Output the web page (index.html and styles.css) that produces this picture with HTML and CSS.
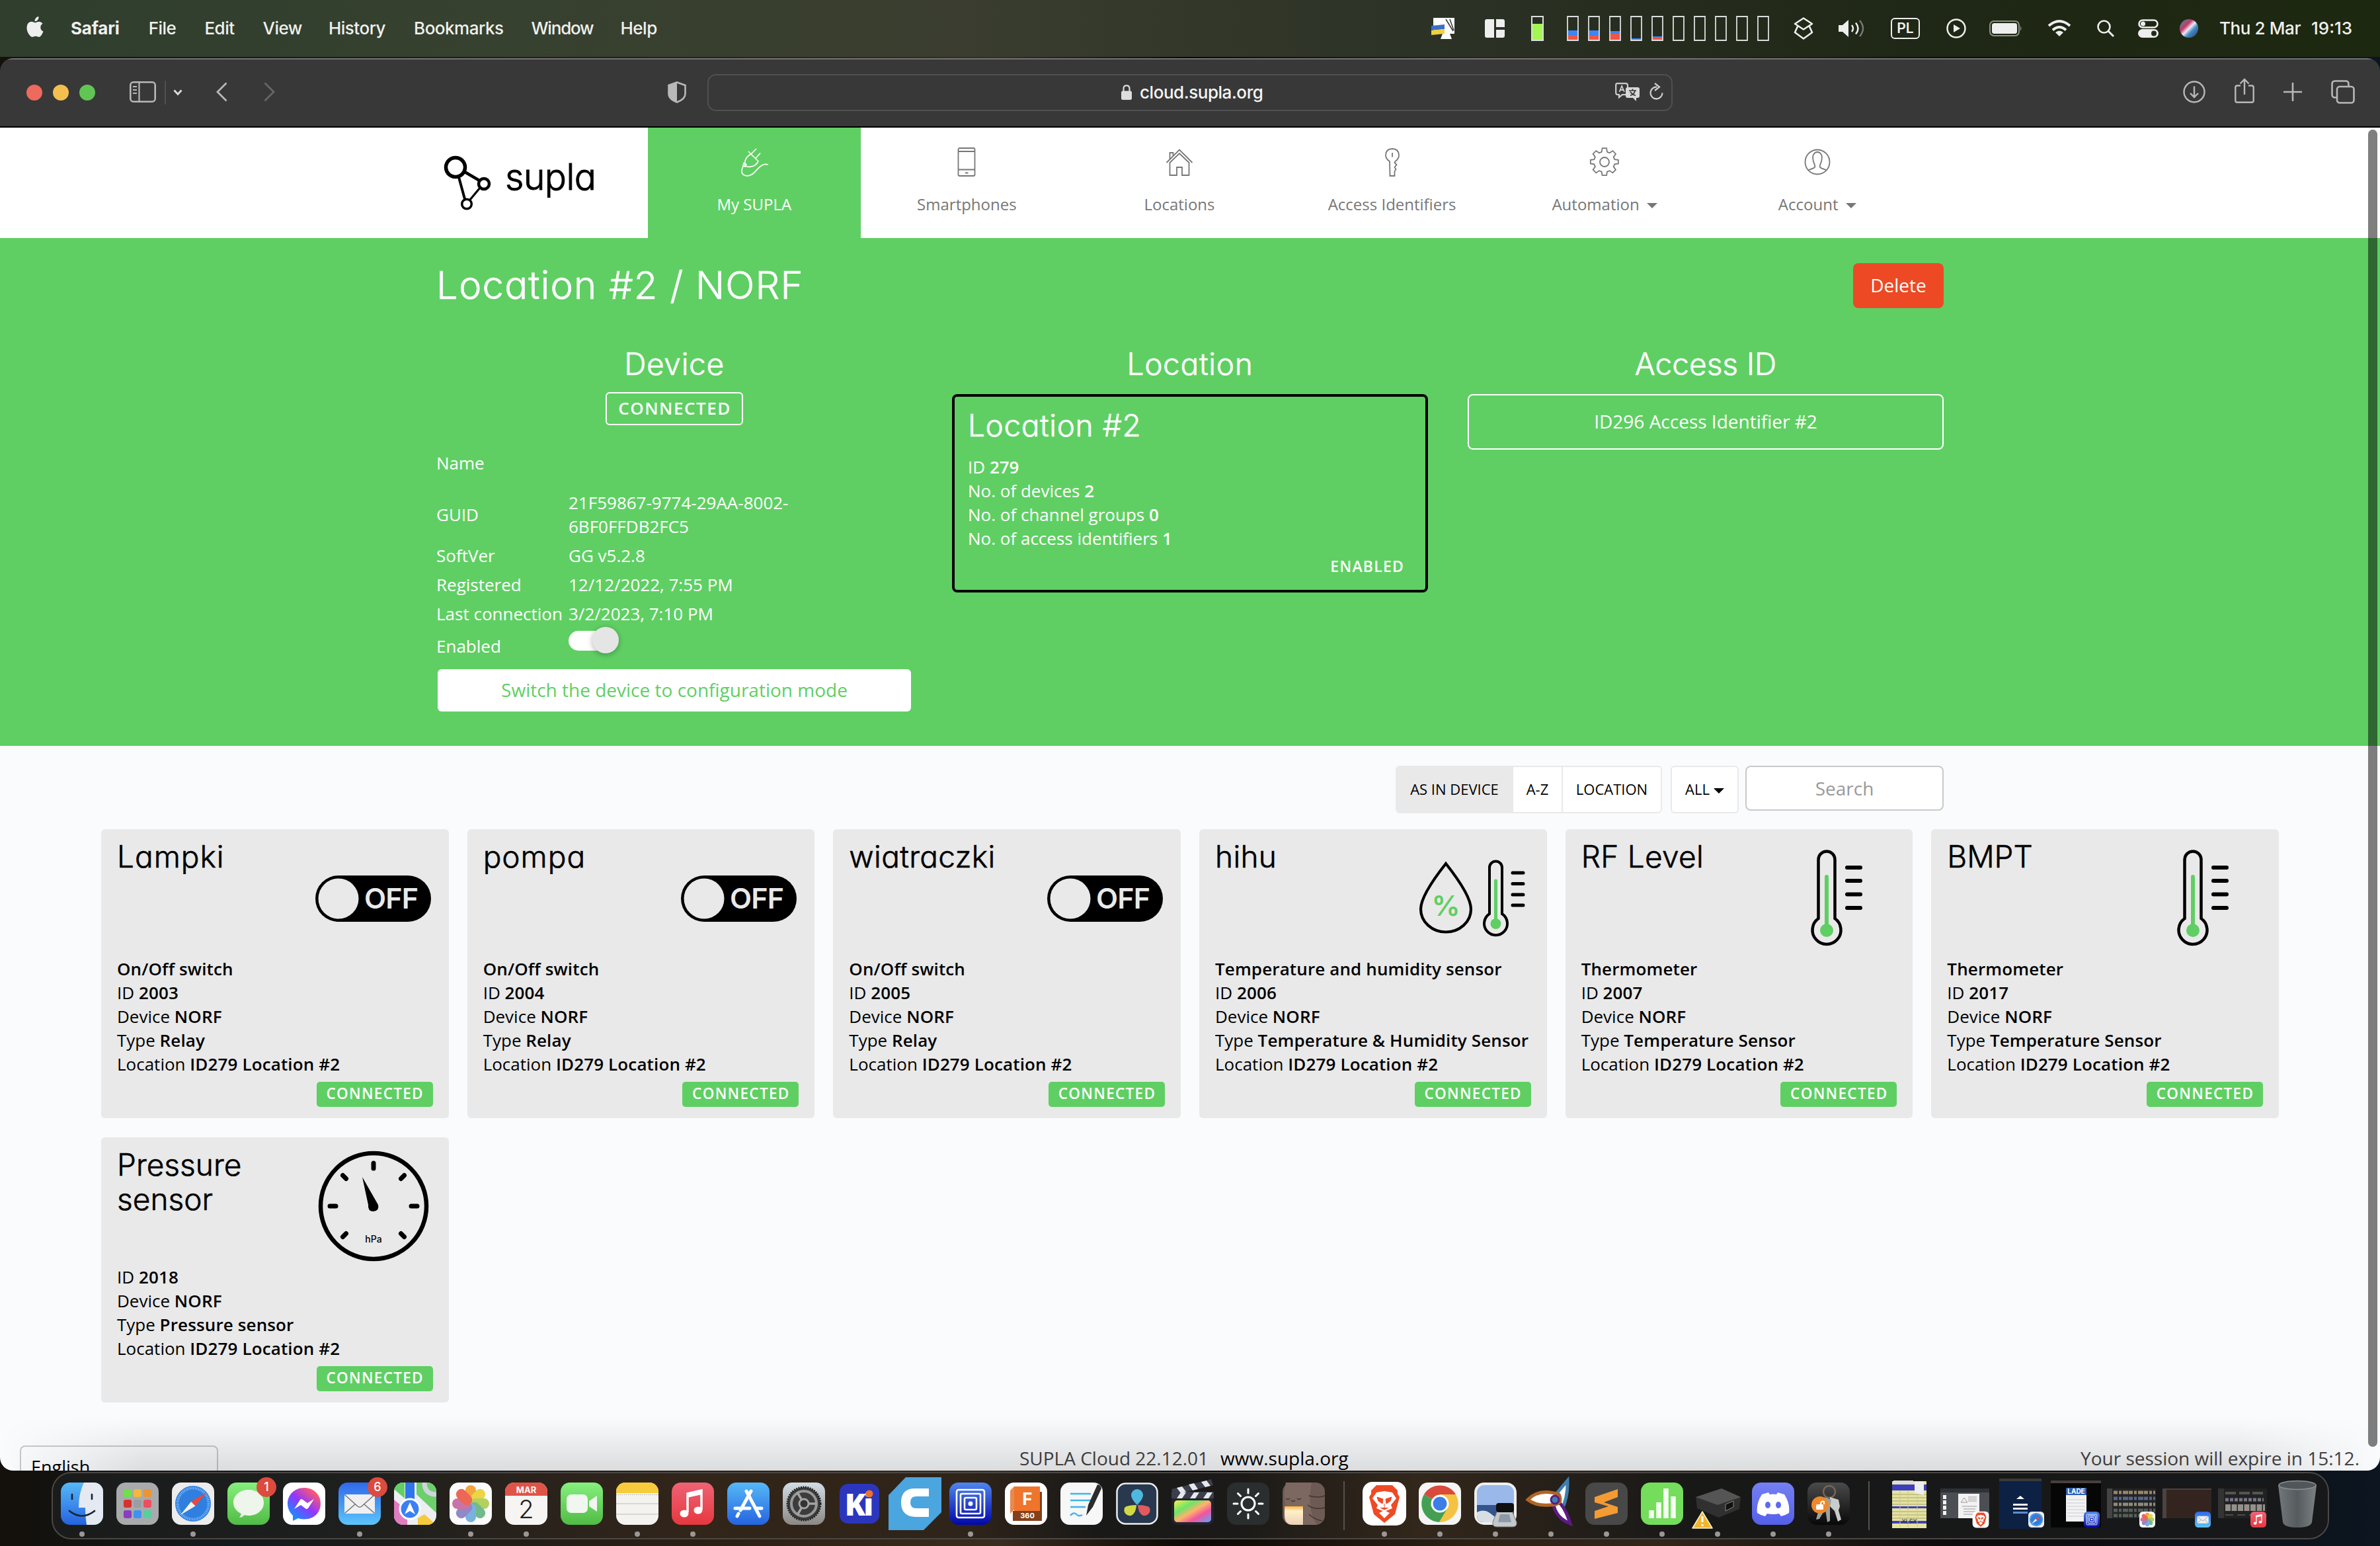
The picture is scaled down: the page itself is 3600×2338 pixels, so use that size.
FILE: index.html
```html
<!DOCTYPE html>
<html lang="en">
<head>
<meta charset="utf-8">
<title>SUPLA Cloud</title>
<link rel="stylesheet" href="styles.css">
</head>
<body>
<svg class="defs" aria-hidden="true">
  <defs>
    <linearGradient id="g-blue" x2="0" y2="1"><stop stop-color="#56b9f7"/><stop offset="1" stop-color="#2563e0"/></linearGradient>
    <linearGradient id="g-mail" x2="0" y2="1"><stop stop-color="#3069ea"/><stop offset="1" stop-color="#5cc5fb"/></linearGradient>
    <linearGradient id="g-green" x2="0" y2="1"><stop stop-color="#86f07d"/><stop offset="1" stop-color="#50bb45"/></linearGradient>
    <linearGradient id="g-red" x2="0" y2="1"><stop stop-color="#ee6375"/><stop offset="1" stop-color="#e6383f"/></linearGradient>
    <linearGradient id="g-gray" x2="0" y2="1"><stop stop-color="#d2dde5"/><stop offset="1" stop-color="#8b8884"/></linearGradient>
    <linearGradient id="g-deep" x2="0" y2="1"><stop stop-color="#4f86ee"/><stop offset="1" stop-color="#0207a8"/></linearGradient>
    <linearGradient id="g-msgr" x2="1" y2="0" gradientTransform="rotate(-50 .5 .5)"><stop stop-color="#1a8bff"/><stop offset=".5" stop-color="#9036ff"/><stop offset="1" stop-color="#ff5a6e"/></linearGradient>
    <linearGradient id="g-fcp" x2="1" y2="1"><stop stop-color="#fff04a"/><stop offset=".3" stop-color="#6be46a"/><stop offset=".5" stop-color="#ffb36b"/><stop offset=".7" stop-color="#f1559f"/><stop offset="1" stop-color="#58a6ff"/></linearGradient>
    <linearGradient id="g-glow" x2="0" y2="1"><stop stop-color="#ffb640"/><stop offset=".25" stop-color="#fff0c8"/><stop offset="1" stop-color="#ecd0b8"/></linearGradient>
    <linearGradient id="g-discord" x2="0" y2="1"><stop stop-color="#7580f2"/><stop offset="1" stop-color="#5560ea"/></linearGradient>
    <linearGradient id="g-dark" x2="0" y2="1"><stop stop-color="#4a4a4a"/><stop offset="1" stop-color="#080808"/></linearGradient>
    <linearGradient id="g-trash" x2="1" y2="0"><stop stop-color="#71777a"/><stop offset=".5" stop-color="#565b5e"/><stop offset="1" stop-color="#7c8184"/></linearGradient>
    <linearGradient id="g-siri" x2="1" y2="1"><stop stop-color="#2f9a86"/><stop offset=".35" stop-color="#c23a6c"/><stop offset=".5" stop-color="#f4e6f4"/><stop offset=".65" stop-color="#3f8fc4"/><stop offset="1" stop-color="#3a2a66"/></linearGradient>
    <symbol id="finder" viewBox="0 0 64 64">
      <rect width="64" height="64" rx="14" fill="url(#g-blue)"/>
      <path d="M35 0H50a14 14 0 0 1 14 14V50a14 14 0 0 1-14 14H39Q37 52 37 38H27Q27 16 35 0Z" fill="#e4e9f2"/>
      <path d="M17 18v7M47 18v7M13 43q19 15 38 0" fill="none" stroke="#1a2330" stroke-width="2.6" stroke-linecap="round"/>
    </symbol>
    <symbol id="launchpad" viewBox="0 0 64 64">
      <rect width="64" height="64" rx="14" fill="#a9aaab"/>
      <rect x="11" y="10" width="12" height="12" rx="3" fill="#6fe04c"/><rect x="26" y="10" width="12" height="12" rx="3" fill="#f4b83a"/><rect x="41" y="10" width="12" height="12" rx="3" fill="#ec9434"/>
      <rect x="11" y="26" width="12" height="12" rx="3" fill="#d8322c"/><rect x="26" y="26" width="12" height="12" rx="3" fill="#9a9ea2"/><rect x="41" y="26" width="12" height="12" rx="3" fill="#ef4d62"/>
      <rect x="11" y="42" width="12" height="12" rx="3" fill="#8b3cc4"/><rect x="26" y="42" width="12" height="12" rx="3" fill="#3b94f4"/><rect x="41" y="42" width="12" height="12" rx="3" fill="#56cfa0"/>
    </symbol>
    <symbol id="safari" viewBox="0 0 64 64">
      <rect width="64" height="64" rx="14" fill="#ececec"/><circle cx="32" cy="32" r="27" fill="#2f7fe0"/>
      <circle cx="32" cy="32" r="23.500" fill="none" stroke="#a9d4fa" stroke-width="4" stroke-dasharray=".8 1.660"/>
      <path d="M52 15 35.500 35.500 29 29Z" fill="#f0453a"/><path d="M13 49 29 29l6.500 6.500Z" fill="#f3f3f3"/>
    </symbol>
    <symbol id="messages" viewBox="0 0 64 64">
      <rect width="64" height="64" rx="14" fill="url(#g-green)"/>
      <path d="M32 11c13 0 23 8 23 19.500S45 50 32 50q-3 0-6-.7-3 3-8 3.700 3-3 2.500-6Q9 41 9 30.500C9 19 19 11 32 11Z" fill="#eef5ea"/>
    </symbol>
    <symbol id="messenger" viewBox="0 0 64 64">
      <rect width="64" height="64" rx="14" fill="#fff"/>
      <path d="M32 8C17 8 7 19 7 32q0 10 8 18v8l8-4q4 1.500 9 1.500c15 0 25-10 25-23.500S47 8 32 8Z" fill="url(#g-msgr)"/>
      <path d="m17 40 9-14q2-2 4 0l7 5 10-6-9 14q-2 2-4 .3L27 34Z" fill="#fff"/>
    </symbol>
    <symbol id="mail" viewBox="0 0 64 64">
      <rect width="64" height="64" rx="14" fill="url(#g-mail)"/>
      <rect x="9" y="18" width="46" height="29" rx="3" fill="#f0f0f0"/>
      <path d="m10 19 19 17q3 2.500 6 0l19-17M10 46l15-13m29 13L39 33" fill="none" stroke="#777" stroke-width="1.600"/>
    </symbol>
    <symbol id="maps" viewBox="0 0 64 64">
      <clipPath id="c-map"><rect width="64" height="64" rx="14"/></clipPath>
      <g clip-path="url(#c-map)"><rect width="64" height="64" fill="#eceef2"/><path d="M0 0h16v24L0 10Z" fill="#62cf66"/><path d="M34 0h30v46L34 18Z" fill="#6ccf6c"/><path d="M0 26 20 42v22H0Z" fill="#e07cc0"/><path d="M36 64V54l10-6 18 16Z" fill="#f6c93e"/><path d="M17 0h14v28H17Z" fill="#2e74ee"/><path d="M46 0q0 18 18 18" fill="none" stroke="#cfd4dd" stroke-width="7"/></g>
      <circle cx="24" cy="40" r="15" fill="#3a80f4" stroke="#fff" stroke-width="3"/><path d="m24 30 8 18-8-5-8 5Z" fill="#fff"/>
    </symbol>
    <symbol id="photos" viewBox="0 0 64 64">
      <rect width="64" height="64" rx="14" fill="#fbfbfb"/>
      <g opacity=".88"><rect x="24" y="4" width="16" height="28" rx="8" fill="#f39a27"/><rect x="24" y="4" width="16" height="28" rx="8" fill="#e9d02c" transform="rotate(45 32 32)"/><rect x="24" y="4" width="16" height="28" rx="8" fill="#a9cc4a" transform="rotate(90 32 32)"/><rect x="24" y="4" width="16" height="28" rx="8" fill="#5fb27c" transform="rotate(135 32 32)"/><rect x="24" y="4" width="16" height="28" rx="8" fill="#67a8dc" transform="rotate(180 32 32)"/><rect x="24" y="4" width="16" height="28" rx="8" fill="#8478c0" transform="rotate(225 32 32)"/><rect x="24" y="4" width="16" height="28" rx="8" fill="#c2639a" transform="rotate(270 32 32)"/><rect x="24" y="4" width="16" height="28" rx="8" fill="#ea5340" transform="rotate(315 32 32)"/></g>
    </symbol>
    <symbol id="calendar" viewBox="0 0 64 64">
      <rect width="64" height="64" rx="14" fill="#f6f5f3"/><path d="M0 20V14A14 14 0 0 1 14 0H50A14 14 0 0 1 64 14v6Z" fill="#e05448"/>
      <text x="32" y="15.500" class="cal-month">MAR</text><text x="32" y="54" class="cal-day">2</text>
    </symbol>
    <symbol id="facetime" viewBox="0 0 64 64">
      <rect width="64" height="64" rx="14" fill="url(#g-green)"/><rect x="9" y="18" width="32" height="28" rx="7" fill="#f2f6f0"/><path d="M43 28 55 20v24L43 36Z" fill="#f2f6f0"/>
    </symbol>
    <symbol id="notes" viewBox="0 0 64 64">
      <rect width="64" height="64" rx="14" fill="#f4f3f0"/><path d="M0 16V14A14 14 0 0 1 14 0H50A14 14 0 0 1 64 14v2Z" fill="#f8cb3c"/><path d="M0 18.500H64" stroke="#b8b4a8" stroke-dasharray="1.500 1.500"/><path d="M0 32H64M0 48H64" stroke="#cfcdc9" stroke-width="1.300"/>
    </symbol>
    <symbol id="music" viewBox="0 0 64 64">
      <rect width="64" height="64" rx="14" fill="url(#g-red)"/><path d="M24 45V17l21-5v29" fill="none" stroke="#fff" stroke-width="3.500"/><path d="M23 16 46 11v7L23 23Z" fill="#fff"/><ellipse cx="19" cy="47" rx="6.500" ry="5.500" fill="#fff"/><ellipse cx="40" cy="42" rx="6.500" ry="5.500" fill="#fff"/>
    </symbol>
    <symbol id="appstore" viewBox="0 0 64 64">
      <rect width="64" height="64" rx="14" fill="url(#g-blue)"/><path d="m29 13 18 34M36 13 20 42M17 47l-2 4M12 39h22M43 39h9M47 47l2 4" stroke="#fff" stroke-width="5" stroke-linecap="round"/>
    </symbol>
    <symbol id="settings" viewBox="0 0 64 64">
      <rect width="64" height="64" rx="14" fill="url(#g-gray)"/><circle cx="32" cy="32" r="25" fill="#3c3c3c" stroke="#222" stroke-width="3" stroke-dasharray="2 1.500"/><circle cx="32" cy="32" r="19" fill="none" stroke="#989898" stroke-width="4"/><circle cx="32" cy="32" r="7" fill="#333" stroke="#a4a4a4" stroke-width="3"/><path d="M40 32H51M28 25 22 15M28 39 22 49" stroke="#a4a4a4" stroke-width="3.500"/>
    </symbol>
    <symbol id="kicad" viewBox="0 0 64 64">
      <rect x="2" y="2" width="60" height="60" rx="13" fill="#2c36bd"/><text x="30" y="50" class="kicad-text">Ki</text><circle cx="47" cy="17" r="5.500" fill="#f0702c"/>
    </symbol>
    <symbol id="cura" viewBox="0 0 80 80"><path d="M26 0H80V53L53 80H0V27Z" fill="#4ba5de"/><path d="M61 17H40Q19 17 19 38t21 22H61V47H42Q33 47 33 38t9-9H61Z" fill="#fff"/></symbol>
    <symbol id="screens" viewBox="0 0 64 64">
      <rect width="64" height="64" rx="14" fill="url(#g-deep)"/><g fill="none" stroke="#fff" stroke-width="2.600"><rect x="11" y="11" width="42" height="42" rx="3"/><rect x="17" y="17" width="30" height="30" rx="2"/><rect x="23" y="23" width="18" height="18" rx="2"/></g><circle cx="32" cy="32" r="3.500" fill="#fff"/>
    </symbol>
    <symbol id="fusion" viewBox="0 0 64 64">
      <rect width="64" height="64" rx="14" fill="#fff"/><path d="m8 12 6-6v35l-6 6Z" fill="#e68a50"/><rect x="14" y="6" width="39" height="37" fill="#ef752c"/><path d="M12 43H53V14h3v44H12Z" fill="#84401a"/><text x="34" y="34" class="fusion-f">F</text><text x="34" y="54" class="fusion-n">360</text>
    </symbol>
    <symbol id="pages" viewBox="0 0 64 64">
      <rect width="64" height="64" rx="14" fill="#f7f7f7"/><path d="M15 17H46M15 27H46M15 37H38M15 50q5-6 9-2t9 1" fill="none" stroke="#3fb4ea" stroke-width="2.400"/><path d="m39 50 3-16 14-31q5 0 6 6L49 37Z" fill="#2c2c2c"/>
    </symbol>
    <symbol id="resolve" viewBox="0 0 64 64">
      <rect x="1.500" y="1.500" width="61" height="61" rx="13" fill="#27384f" stroke="#eee" stroke-width="2.500"/><path d="M32 34Q23 25 23 19a9 9 0 0 1 18 0q0 6-9 15Z" fill="#4fb8df"/><path d="M31 34q-1 13-8 16-7 1-10-5-2-7 3-9 6-2 15-2Z" fill="#d2d944"/><path d="M33 34q1 13 8 16 7 1 10-5 2-7-3-9-6-2-15-2Z" fill="#e05a5e"/>
    </symbol>
    <symbol id="fcp" viewBox="0 0 64 64">
      <rect y="20" width="64" height="44" rx="9" fill="#22242c"/><rect x="4" y="27" width="56" height="33" rx="5" fill="url(#g-fcp)"/><path d="M0 14h64v10H0Z" fill="#3b3f4c"/><path d="M0 10 60-5l3 9L3 19Z" fill="#3b3f4c"/><path d="m8 8 8-2 6 8-8 2Zm18-5 8-2 6 9-8 2ZM45-1l8-2 6 8-8 2ZM8 24l6-9h8l-6 9Zm20 0 6-9h8l-6 9Zm20 0 6-9h8l-6 9Z" fill="#e6e8ee"/>
    </symbol>
    <symbol id="lunar" viewBox="0 0 64 64">
      <rect width="64" height="64" rx="14" fill="#2b2e2f"/><circle cx="32" cy="32" r="10" fill="none" stroke="#fff" stroke-width="3"/><path d="M32 10v6M32 48v6M10 32h6M48 32h6M16.500 16.500l4 4M43.500 43.500l4 4M16.500 47.500l4-4M43.500 20.500l4-4" stroke="#fff" stroke-width="3" stroke-linecap="round"/>
    </symbol>
    <symbol id="amphetamine" viewBox="0 0 64 64">
      <rect width="64" height="64" rx="14" fill="#6d5a54"/><path d="M5 0q-5 18 0 36H32V64H52Q36 40 44 0Z" fill="#7c6861"/><path d="M3 36H31V64H16Q3 64 3 50Z" fill="url(#g-glow)"/><path d="M5 24q3 3 6 0M22 24q3 3 6 0M13 27q3 3 6 0M40 20q14 4 24 0M38 34q10 8 26 4M40 48q8 8 20 10" fill="none" stroke="#43332e" stroke-width="1.500"/>
    </symbol>
    <symbol id="brave" viewBox="0 0 64 64">
      <rect x="-1" y="-1" width="66" height="66" rx="15" fill="#fff"/><path d="M20 4H44l8 8v5l3 5-7 26-16 13L16 48 9 22l3-5v-5Z" fill="#ef4a26"/><path d="m20 15 12-2 12 2 6 9-8 10 2 5-12 5-12-5 2-5-8-10Z" fill="#fff"/><path d="m21 22 9 3-1 7-6-4Zm22 0-9 3 1 7 6-4ZM32 32v6M26 38l6 3 6-3" fill="#ef4a26" stroke="#ef4a26"/><path d="m32 42 8 4-8 8-8-8Z" fill="#fff"/>
    </symbol>
    <symbol id="chrome" viewBox="0 0 64 64">
      <rect width="64" height="64" rx="14" fill="#f5f5f5"/><path d="M32 32 8 18A28 28 0 0 1 56 18H32Z" fill="#d94a3c"/><path d="M32 32 8 18A28 28 0 0 0 31 60L44 39Z" fill="#43a053"/><path d="M32 18H56A28 28 0 0 1 31 60L44 38Z" fill="#f5c343"/><circle cx="32" cy="32" r="13.500" fill="#fff"/><circle cx="32" cy="32" r="10.500" fill="#3c7ee8"/>
    </symbol>
    <symbol id="preview" viewBox="0 0 64 64">
      <rect x="2" y="2" width="60" height="60" rx="13" fill="#9ab8ea" stroke="#eeefec" stroke-width="4"/><path d="M4 34H60V50Q60 60 50 60H14Q4 60 4 50Z" fill="#34558c"/><path d="M4 45q12-6 22 3t16 2v10H14Q4 60 4 50Z" fill="#d8dfe4"/><path d="M36 40h20l8 20q1 7-6 7H34q-7 0-6-7Z" fill="#c3c8cb" stroke="#777"/><rect x="33" y="31" width="27" height="14" rx="4" fill="#101010"/><path d="M39 48h14l3 12H36Z" fill="#8d99a6"/>
    </symbol>
    <symbol id="nova" viewBox="0 0 64 64">
      <path d="M57-3Q58 22 48 42L36 22Z" fill="#fff" stroke="#3d7fae" stroke-width="5"/><path d="M38 26Q52 32 61 62 40 54 36 34Z" fill="#fff" stroke="#5c1a86" stroke-width="5"/><path d="M-3 26Q14 8 44 18 52 34 30 34 10 36-3 26Z" fill="#fff" stroke="#b26425" stroke-width="5"/><circle cx="38" cy="26" r="6" fill="#3d7fae" stroke="#5c1a86" stroke-width="3"/>
    </symbol>
    <symbol id="sublime" viewBox="0 0 64 64"><rect width="64" height="64" rx="14" fill="#484848"/><path d="m14 22 35-12v12L28 30l21 7v9L14 55V43l21-7-21-6Z" fill="#f59b33"/></symbol>
    <symbol id="numbers" viewBox="0 0 64 64"><rect width="64" height="64" rx="14" fill="#75dd5c"/><path d="M16 42v12M27 30v24M38 9v45M49 21v33" stroke="#f6fff3" stroke-width="7.500"/></symbol>
    <symbol id="printer" viewBox="0 0 64 64">
      <path d="M-1 22 38 9 67 22 65 40 34 53 1 39Z" fill="#303030"/><path d="M-1 22 38 9 67 22 32 34Z" fill="#555"/><path d="M44 33 56 28v9l-12 6Z" fill="#111" stroke="#888"/><path d="M9 44 24 69H-6Z" fill="#f1b62d" stroke="#fff4cf" stroke-width="1.500" stroke-linejoin="round"/><path d="M9 51v9M9 63v3" stroke="#fff" stroke-width="3"/>
    </symbol>
    <symbol id="discord" viewBox="0 0 64 64">
      <rect width="64" height="64" rx="14" fill="url(#g-discord)"/><path d="m25 15-10 3Q6 32 8 46q6 4 12 5l3-4q9 2 18 0l3 4q6-1 12-5 2-14-7-28l-10-3-2 3q-5-1-10 0Z" fill="#fff"/><ellipse cx="24" cy="34" rx="4" ry="5" fill="#5f69ec"/><ellipse cx="40" cy="34" rx="4" ry="5" fill="#5f69ec"/>
    </symbol>
    <symbol id="keychain" viewBox="0 0 64 64">
      <rect width="64" height="64" rx="14" fill="url(#g-dark)"/><circle cx="33" cy="14" r="9" fill="none" stroke="#75675a" stroke-width="2.500"/><path d="m34 22 13 4 2 10-2 6 4 14-5 3-5-16-7-7Z" fill="#c9cdca"/><path d="m26 22 10 4-2 12v20l-4 2-3-20-9 15-5 1 5-18Z" fill="#9da19f"/><circle cx="19" cy="34" r="13" fill="#f0882a"/><rect x="13" y="33" width="11" height="8" rx="1.500" fill="#fff"/><path d="M20 33q0-6 5-4v4" fill="none" stroke="#fff" stroke-width="2"/>
    </symbol>
    <symbol id="switch-off" viewBox="0 0 180 180">
      <rect x="2" y="55" width="175" height="70" rx="35"/><circle cx="37" cy="90" r="30.500" fill="#e9e9e9"/><text x="76" y="105" class="switch-text" textLength="82">OFF</text>
    </symbol>
    <symbol id="thermo" viewBox="0 0 180 180">
      <path d="M61.500 120V31a12.500 12.500 0 0 1 25 0v89a21.500 21.500 0 1 1-25 0Z" fill="none" stroke="#000" stroke-width="4.500"/>
      <path d="M74 57v80" stroke="#5fcf63" stroke-width="6" stroke-linecap="round"/><circle cx="74" cy="138" r="10" fill="#5fcf63"/>
      <path d="M105 43h20M105 63h20M105 83.500h20M105 104h20" stroke="#000" stroke-width="6" stroke-linecap="round"/>
    </symbol>
  </defs>
</svg>

<header class="menubar">
  <nav class="menus">
    <svg class="apple" viewBox="0 0 26 32"><path d="M18.500 0q.4 3-1.500 5.200T12.700 7.300q-.4-2.800 1.500-5T18.500 0ZM24.600 10.800q-3.400 2-3.300 5.800.1 4.300 4.200 6-1.300 3.700-3.400 6.300-1.600 2-3.600 2-1.200 0-2.700-.8-2.300-.8-4.500.1-1.600.7-2.600.7-2.300 0-4.700-3.700Q.3 22.300.5 16.500.9 8.500 7.500 7.800q1.600 0 3.300.8 1.700.8 2.300.7.700 0 2.600-.9 5.700-2 8.900 2.400Z" fill="#eee"/></svg>
    <b class="menu app-name">Safari</b><span class="menu m-file">File</span><span class="menu">Edit</span><span class="menu">View</span><span class="menu m-history">History</span><span class="menu">Bookmarks</span><span class="menu m-window">Window</span><span class="menu">Help</span>
  </nav>
  <div class="status">
    <svg class="st-monitor" viewBox="0 0 38 32"><path d="M3 0h32v24h-7l3 8H14l3-8H3Z" fill="#fff"/><path d="m22 2 11 18M28 2l6 17" stroke="#333" stroke-width="1.500"/><path d="M0 12 20 10v7L0 19Z" fill="#3c6fc4"/><path d="M0 19l20-2v7L0 26Z" fill="#ecd23f"/></svg>
    <svg class="st-tiles" viewBox="0 0 30 28"><path d="M3 0h11v28H3q-3 0-3-3V3q0-3 3-3ZM17 0h10q3 0 3 3v9H17ZM17 16h13v9q0 3-3 3H17Z" fill="#eee"/></svg>
    <svg class="st-mem" viewBox="0 0 19 38"><rect x="1" y="1" width="17" height="36" fill="none" stroke="#ddd" stroke-width="2"/><rect x="2" y="12" width="15" height="24" fill="#a4f750"/></svg>
    <svg class="st-cpu" viewBox="0 0 306 38"><g fill="#ef5548"><path d="M1 29h16v7H1ZM33 30h16v6H33ZM65 27h16v9H65ZM129 33h16v3h-16Z"/></g><g fill="#3b86f6"><path d="M1 22h16v7H1ZM33 22h16v8H33ZM65 23h16v4H65ZM97 34h16v2H97ZM129 31h16v2h-16Z"/></g><g fill="none" stroke="#ddd" stroke-width="1.800"><path d="M1 1h16v36H1ZM33 1h16v36H33ZM65 1h16v36H65ZM97 1h16v36H97ZM129 1h16v36h-16ZM161 1h16v36h-16ZM193 1h16v36h-16ZM225 1h16v36h-16ZM257 1h16v36h-16ZM289 1h16v36h-16Z"/></g></svg>
    <svg class="st-layers" viewBox="0 0 30 34"><path d="M15 1.500 28 10 15 18.500 2 10ZM6.500 13 2 23l13 9.500L28 23l-4.500-10" fill="none" stroke="#eee" stroke-width="2.600" stroke-linejoin="round"/></svg>
    <svg class="st-sound" viewBox="0 0 40 28"><path d="M0 9h6l9-8v26l-9-8H0Z" fill="#eee"/><path d="M20 9q4 5 0 10M26 5.500q7 8.500 0 17" fill="none" stroke="#eee" stroke-width="2.500"/><path d="M32 2q10 12 0 24" fill="none" stroke="#777" stroke-width="2.500"/></svg>
    <span class="st-lang">PL</span>
    <svg class="st-play" viewBox="0 0 30 30"><circle cx="15" cy="15" r="13.500" fill="none" stroke="#eee" stroke-width="2.500"/><path d="m11 9 10 6-10 6Z" fill="#eee"/></svg>
    <svg class="st-battery" viewBox="0 0 50 24"><rect x="1" y="1" width="44" height="22" rx="6" fill="none" stroke="#8a9084" stroke-width="2"/><rect x="4" y="4" width="38" height="16" rx="3.500" fill="#eee"/><path d="M47 8q3 4 0 8Z" fill="#8a9084"/></svg>
    <svg class="st-wifi" viewBox="0 0 36 26"><path d="M2 9q16-14 32 0M8 15.500q10-9 20 0" fill="none" stroke="#eee" stroke-width="4"/><path d="m18 25-6-6q6-5 12 0Z" fill="#eee"/></svg>
    <svg class="st-search" viewBox="0 0 26 26"><circle cx="10.500" cy="10.500" r="9" fill="none" stroke="#eee" stroke-width="2.600"/><path d="m17 17 8 8" stroke="#eee" stroke-width="3"/></svg>
    <svg class="st-cc" viewBox="0 0 31 28"><rect x="1.500" y="1.500" width="28" height="11" rx="5.500" fill="none" stroke="#eee" stroke-width="2.600"/><circle cx="7.500" cy="7" r="3.500" fill="#eee"/><rect y="15" width="31" height="13" rx="6.500" fill="#eee"/><circle cx="24" cy="21.500" r="4" fill="#232b1b"/></svg>
    <svg class="st-siri" viewBox="0 0 28 28"><circle cx="14" cy="14" r="14" fill="url(#g-siri)"/></svg>
    <span class="st-date">Thu 2 Mar</span><span class="st-time">19:13</span>
  </div>
</header>

<main class="window">
  <div class="toolbar">
    <div class="tb-left">
      <i class="light red"></i><i class="light yellow"></i><i class="light green"></i>
      <svg class="tb-sidebar" viewBox="0 0 40 32"><rect x="1.300" y="1.300" width="37.400" height="29.400" rx="4.500" fill="none" stroke="#b8b8b8" stroke-width="2.600"/><path d="M14.500 1v30M5 8h6M5 13h6M5 18h6" stroke="#b8b8b8" stroke-width="2.200"/></svg>
      <i class="tb-rule"></i>
      <svg class="tb-chev" viewBox="0 0 14 10"><path d="m1.500 1.500 5.500 6 5.500-6" fill="none" stroke="#ddd" stroke-width="2.800"/></svg>
      <svg class="tb-back" viewBox="0 0 17 30"><path d="M15.500 1.500 2 15l13.500 13.500" fill="none" stroke="#b8b8b8" stroke-width="2.800"/></svg>
      <svg class="tb-fwd" viewBox="0 0 17 30"><path d="M1.500 1.500 15 15 1.500 28.500" fill="none" stroke="#666" stroke-width="2.800"/></svg>
    </div>
    <svg class="tb-shield" viewBox="0 0 28 33"><path d="M14 1.500 26.500 6v13q0 8-12.500 12.500Q1.500 27 1.500 19V6Z" fill="none" stroke="#b8b8b8" stroke-width="2.600"/><path d="M14 1.500V31.500Q1.500 27 1.500 19V6Z" fill="#b8b8b8"/></svg>
    <div class="address">
      <svg class="tb-lock" viewBox="0 0 16 24"><rect y="9.500" width="16" height="13.500" rx="2.500" fill="#ddd"/><path d="M3.500 11V6q0-4.700 4.500-4.700T12.500 6v5" fill="none" stroke="#ddd" stroke-width="2.200"/></svg>
      <span class="url">cloud.supla.org</span>
      <div class="address-tools">
        <svg class="tb-translate" viewBox="0 0 38 28"><path d="M3 1.200h13q3 0 3 3v11q0 3-3 3h-5l-5 4v-4H4q-2.800 0-2.800-3v-11q0-3 2-3Z" fill="none" stroke="#ccc" stroke-width="2.200"/><path d="m6.500 14 3.700-9 3.700 9M8 11h5" fill="none" stroke="#ccc" stroke-width="1.800"/><path d="M19 7h15q3 0 3 3v10q0 3-3 3h-2v5l-5-5h-8q-3 0-3-3V10q0-3 3-3Z" fill="#d8d8d8"/><path d="M21 12h11M26.500 9.500V12M23 19.500q6-2 7-7M23 13.500q2 4 8 6" fill="none" stroke="#383838" stroke-width="1.700"/></svg>
        <svg class="tb-reload" viewBox="0 0 22 28"><path d="M12 6.500a9 9 0 1 0 8.500 9" fill="none" stroke="#ccc" stroke-width="2.300"/><path d="m9 1 7 5.500-7 5.500" fill="none" stroke="#ccc" stroke-width="2.300"/></svg>
      </div>
    </div>
    <div class="tb-right">
      <svg class="tb-download" viewBox="0 0 34 34"><circle cx="17" cy="17" r="15.500" fill="none" stroke="#b8b8b8" stroke-width="2.400"/><path d="M17 8.500v16M11 19l6 6 6-6" fill="none" stroke="#b8b8b8" stroke-width="2.400"/></svg>
      <svg class="tb-share" viewBox="0 0 30 38"><path d="M9 11.500H4q-2.700 0-2.700 2.700V34q0 2.700 2.700 2.700H26q2.700 0 2.700-2.700V14.200q0-2.700-2.700-2.700H21M15 25V2.500M8.500 8.500 15 2l6.500 6.500" fill="none" stroke="#b8b8b8" stroke-width="2.400"/></svg>
      <svg class="tb-plus" viewBox="0 0 28 28"><path d="M14 0v28M0 14h28" stroke="#b8b8b8" stroke-width="2.600"/></svg>
      <svg class="tb-tabs" viewBox="0 0 36 36"><rect x="9" y="10" width="25.500" height="24.500" rx="4" fill="none" stroke="#b8b8b8" stroke-width="2.600"/><path d="M8 26.500H6q-4.500 0-4.500-4.500V6Q1.500 1.500 6 1.500H22Q26.500 1.500 26.500 6V9" fill="none" stroke="#b8b8b8" stroke-width="2.600"/></svg>
    </div>
  </div>

  <div class="page">
    <div class="site-header">
      <div class="logo">
        <svg class="logo-mark" viewBox="0 0 72 84"><g fill="none" stroke="#000"><circle cx="17" cy="17" r="14.500" stroke-width="5.500"/><circle cx="60" cy="42" r="8" stroke-width="4.500"/><circle cx="34" cy="72.500" r="7.300" stroke-width="3.500"/><path d="M31 24 54 37.500" stroke-width="4.500"/><path d="m22 32 9 33" stroke-width="4"/><path d="M54 48 39 66" stroke-width="3.200"/></g></svg>
        <span class="logo-text">supla</span>
      </div>
      <nav class="site-nav">
        <a class="nav-item active"><svg class="nav-icon" viewBox="0 0 48 48"><path d="m15 8 15.500 15.500M19 12.500 17 13q-9 6-7 17Q16 33 24 29.500 29 26 29.500 23M19.500 11.500 27 4M26 18.500l7-8M8 25.500l4 2-2 3.500-3-1.500Zm-1 5Q2 41 9 44t15-4q5-6 10-10t11-2" fill="none" stroke="currentColor" stroke-width="1.700"/></svg><span>My SUPLA</span></a>
        <a class="nav-item"><svg class="nav-icon" viewBox="0 0 48 48"><rect x="11.500" y="3" width="25" height="42" rx="2" fill="none" stroke="currentColor" stroke-width="1.800"/><path d="M11 8h26M11 35.500h26M22 40.500h4.500" stroke="currentColor" stroke-width="2"/></svg><span>Smartphones</span></a>
        <a class="nav-item"><svg class="nav-icon" viewBox="0 0 48 48"><path d="M4.500 25 24 5.500 43.500 25M9.500 20V10h5v5M9.500 25v19H20V32h8v12H38.500V25L24 11Z" fill="none" stroke="currentColor" stroke-width="1.800"/></svg><span>Locations</span></a>
        <a class="nav-item"><svg class="nav-icon" viewBox="0 0 48 48"><path d="M20 23Q14 19.500 14 13.500 14.500 4 24 4t10 9.500q0 6-5.500 9.500l-1 2 3 3-3 4 2 3-2 3v7H20.500ZM24 10v6.500" fill="none" stroke="currentColor" stroke-width="1.800"/></svg><span>Access Identifiers</span></a>
        <a class="nav-item"><svg class="nav-icon" viewBox="0 0 48 48"><path d="M20.500 4.500h7l1 6 4 1.700 5-3.500 5 5-3.600 5 1.700 4 6 .8v6l-6 1-1.700 4 3.600 5-5 5-5-3.500-4 1.600-1 6h-7l-1-6-4-1.600-5 3.500-5-5 3.500-5-1.600-4-6-1v-6l6-.8 1.600-4-3.500-5 5-5 5 3.500 4-1.700Z" transform="translate(1.500 -1) scale(.93)" fill="none" stroke="currentColor" stroke-width="1.900"/><circle cx="24" cy="24" r="7" fill="none" stroke="currentColor" stroke-width="1.800"/></svg><span>Automation <i class="caret"></i></span></a>
        <a class="nav-item"><svg class="nav-icon" viewBox="0 0 48 48"><circle cx="24" cy="24" r="18.500" fill="none" stroke="currentColor" stroke-width="1.800"/><path d="M10.500 36q7-2 9.500-4 1-3-1.500-7-2-6-1-11 2-5 6.500-5t6.500 5q1 5-1 11-2.500 4-1.500 7 2.500 2 9.500 4" fill="none" stroke="currentColor" stroke-width="1.800"/></svg><span>Account <i class="caret"></i></span></a>
      </nav>
    </div>

    <section class="hero">
      <div class="container">
        <div class="hero-top"><h1 class="page-title">Location #2 / NORF</h1><button class="delete">Delete</button></div>
        <div class="columns">
          <div class="column">
            <h2>Device</h2>
            <div class="hero-badge">CONNECTED</div>
            <dl class="props">
              <dt>Name</dt><dd></dd>
              <dt class="p-guid">GUID</dt><dd>21F59867-9774-29AA-8002-<br>6BF0FFDB2FC5</dd>
              <dt>SoftVer</dt><dd>GG v5.2.8</dd>
              <dt>Registered</dt><dd>12/12/2022, 7:55 PM</dd>
              <dt>Last connection</dt><dd>3/2/2023, 7:10 PM</dd>
              <dt class="p-enabled">Enabled</dt><dd><span class="toggle"><i class="knob"></i></span></dd>
            </dl>
            <button class="config-btn">Switch the device to configuration mode</button>
          </div>
          <div class="column">
            <h2>Location</h2>
            <div class="location-card">
              <h3 class="location-title">Location #2</h3>
              <p>ID <b>279</b></p><p>No. of devices <b>2</b></p><p>No. of channel groups <b>0</b></p><p>No. of access identifiers <b>1</b></p>
              <div class="enabled">ENABLED</div>
            </div>
          </div>
          <div class="column">
            <h2 class="h-access">Access ID</h2>
            <div class="access-box">ID296 Access Identifier #2</div>
          </div>
        </div>
      </div>
    </section>

    <div class="filters container">
      <div class="group"><span class="btn b-device">AS IN DEVICE</span><span class="btn b-az">A-Z</span><span class="btn b-loc">LOCATION</span></div>
      <div class="btn-all">ALL<i class="caret"></i></div>
      <input class="search" placeholder="Search">
    </div>

    <section class="cards">
      <article class="card"><div class="card-head"><h3 class="wide">Lampki</h3><svg class="card-icon"><use href="#switch-off"/></svg></div><p><b>On/Off switch</b></p><p>ID <b>2003</b></p><p>Device <b>NORF</b></p><p>Type <b>Relay</b></p><p>Location <b>ID279 Location #2</b></p><span class="badge">CONNECTED</span></article>
      <article class="card"><div class="card-head"><h3 class="wide">pompa</h3><svg class="card-icon"><use href="#switch-off"/></svg></div><p><b>On/Off switch</b></p><p>ID <b>2004</b></p><p>Device <b>NORF</b></p><p>Type <b>Relay</b></p><p>Location <b>ID279 Location #2</b></p><span class="badge">CONNECTED</span></article>
      <article class="card"><div class="card-head"><h3>wiatraczki</h3><svg class="card-icon"><use href="#switch-off"/></svg></div><p><b>On/Off switch</b></p><p>ID <b>2005</b></p><p>Device <b>NORF</b></p><p>Type <b>Relay</b></p><p>Location <b>ID279 Location #2</b></p><span class="badge">CONNECTED</span></article>
      <article class="card"><div class="card-head"><h3>hihu</h3><svg class="card-icon" viewBox="0 0 180 180">
        <path d="M51 37Q13 85 13 106a38 34.500 0 0 0 76 0Q89 85 51 37Z" fill="none" stroke="#000" stroke-width="4.200"/><text x="51" y="116" class="percent">%</text>
        <path d="M117 113V43a9.500 9.500 0 0 1 19 0v70a17.500 17.500 0 1 1-19 0Z" fill="none" stroke="#000" stroke-width="4"/><path d="M126.500 63v66" stroke="#5fcf63" stroke-width="5" stroke-linecap="round"/><circle cx="126.500" cy="128" r="8" fill="#5fcf63"/><path d="M152 51h16M152 67.500h16M152 84h16M152 100h16" stroke="#000" stroke-width="5" stroke-linecap="round"/></svg></div><p><b>Temperature and humidity sensor</b></p><p>ID <b>2006</b></p><p>Device <b>NORF</b></p><p>Type <b>Temperature &amp; Humidity Sensor</b></p><p>Location <b>ID279 Location #2</b></p><span class="badge">CONNECTED</span></article>
      <article class="card"><div class="card-head"><h3>RF Level</h3><svg class="card-icon"><use href="#thermo"/></svg></div><p><b>Thermometer</b></p><p>ID <b>2007</b></p><p>Device <b>NORF</b></p><p>Type <b>Temperature Sensor</b></p><p>Location <b>ID279 Location #2</b></p><span class="badge">CONNECTED</span></article>
      <article class="card"><div class="card-head"><h3 class="tight">BMPT</h3><svg class="card-icon"><use href="#thermo"/></svg></div><p><b>Thermometer</b></p><p>ID <b>2017</b></p><p>Device <b>NORF</b></p><p>Type <b>Temperature Sensor</b></p><p>Location <b>ID279 Location #2</b></p><span class="badge">CONNECTED</span></article>
      <article class="card"><div class="card-head"><h3 class="tight">Pressure sensor</h3><svg class="card-icon" viewBox="0 0 180 180">
        <circle cx="90" cy="89" r="80" fill="none" stroke="#000" stroke-width="6.500"/>
        <path d="M90 24v8M24 89h9M147 89h9M43.500 42.500l5 5M136.500 42.500l-5 5M43.500 135.500l5-5M136.500 135.500l-5-5" stroke="#000" stroke-width="7" stroke-linecap="round"/>
        <path d="m73 45 24 42q2 9-7 10-9 0-8-10Z"/><text x="90" y="144" class="hpa">hPa</text></svg></div><p>ID <b>2018</b></p><p>Device <b>NORF</b></p><p>Type <b>Pressure sensor</b></p><p>Location <b>ID279 Location #2</b></p><span class="badge">CONNECTED</span></article>
    </section>

    <footer class="footer">
      <div class="language">English</div>
      <div class="version"><span>SUPLA Cloud 22.12.01</span><a class="v-link">www.supla.org</a></div>
      <div class="session">Your session will expire in 15:12.</div>
    </footer>
    <div class="dock-shade"></div>
    <div class="scrollbar"></div>
  </div>
</main>

<div class="dock">
  <div class="app run"><svg><use href="#finder"/></svg></div>
  <div class="app"><svg><use href="#launchpad"/></svg></div>
  <div class="app run"><svg><use href="#safari"/></svg></div>
  <div class="app"><svg><use href="#messages"/></svg><span class="count">1</span></div>
  <div class="app"><svg><use href="#messenger"/></svg></div>
  <div class="app run"><svg><use href="#mail"/></svg><span class="count">6</span></div>
  <div class="app"><svg><use href="#maps"/></svg></div>
  <div class="app run"><svg><use href="#photos"/></svg></div>
  <div class="app run"><svg><use href="#calendar"/></svg></div>
  <div class="app"><svg><use href="#facetime"/></svg></div>
  <div class="app run"><svg><use href="#notes"/></svg></div>
  <div class="app run"><svg><use href="#music"/></svg></div>
  <div class="app"><svg><use href="#appstore"/></svg></div>
  <div class="app"><svg><use href="#settings"/></svg></div>
  <div class="app"><svg><use href="#kicad"/></svg></div>
  <div class="app big"><svg><use href="#cura"/></svg></div>
  <div class="app run"><svg><use href="#screens"/></svg></div>
  <div class="app"><svg><use href="#fusion"/></svg></div>
  <div class="app"><svg><use href="#pages"/></svg></div>
  <div class="app"><svg><use href="#resolve"/></svg></div>
  <div class="app"><svg><use href="#fcp"/></svg></div>
  <div class="app"><svg><use href="#lunar"/></svg></div>
  <div class="app"><svg><use href="#amphetamine"/></svg></div>
  <i class="dock-rule"></i>
  <div class="app run"><svg><use href="#brave"/></svg></div>
  <div class="app run"><svg><use href="#chrome"/></svg></div>
  <div class="app run"><svg><use href="#preview"/></svg></div>
  <div class="app run"><svg><use href="#nova"/></svg></div>
  <div class="app run"><svg><use href="#sublime"/></svg></div>
  <div class="app run"><svg><use href="#numbers"/></svg></div>
  <div class="app run"><svg><use href="#printer"/></svg></div>
  <div class="app run"><svg><use href="#discord"/></svg></div>
  <div class="app run"><svg><use href="#keychain"/></svg></div>
  <i class="dock-rule"></i>
  <svg class="thumb" viewBox="0 0 84 80"><path d="M16 6h52v71H16Z" fill="#e6e3a0"/><path d="M16 11h52v9H16ZM16 44h52v3H16ZM16 66h52v4H16Z" fill="#3d3fc0"/><path d="M16 26h52M16 31h52M16 36h52M16 41h52M16 52h52M16 57h52M16 62h52" stroke="#a5a56a"/><path d="M28 20v56M40 20v56M54 20v56" stroke="#c8c6a0"/><path d="M18 5h30v5H18Z" fill="#ddd"/><path d="M50 6h14v21l-14-3Z" fill="#eee"/><text x="42" y="70" class="xlsx">XLSX</text></svg>
  <svg class="thumb" viewBox="0 0 84 80"><path d="M5 17h74v45H5Z" fill="#4b4e52"/><path d="M5 17h74v6H5Z" fill="#2f3138"/><path d="M32 25h32v37H32ZM9 27h5v6H9ZM9 35h5v6H9ZM9 43h5v6H9ZM9 51h5v6H9Z" fill="#f2f2f2"/><path d="m36 38 5-7 5 7ZM47 30h13M47 33h13M47 36h13M38 44h22M40 48h18M40 52h18M40 56h14" fill="none" stroke="#999"/><use href="#brave" x="54" y="52" width="24" height="24"/></svg>
  <svg class="thumb" viewBox="0 0 84 80"><path d="M10 2h64v76H10Z" fill="#0d2145"/><path d="M10 2h64v4H10Z" fill="#3a3a3a"/><path d="m42 28 6 5H36Z" fill="#fff"/><path d="M31 40h22v3H31ZM31 46h22v3H31Z" fill="#eee"/><path d="M31 52h22v3H31Z" fill="#5b8fd0"/><use href="#safari" x="54" y="52" width="24" height="24"/></svg>
  <svg class="thumb" viewBox="0 0 84 80"><path d="M4 5h76v71H4Z" fill="#060606"/><path d="M4 5h76v4H4Z" fill="#48403e"/><path d="M27 16h31v51H27Z" fill="#f2f2f2"/><path d="M27 16h31v11H27Z" fill="#2b62b8"/><text x="42.500" y="25" class="lade">LADE</text><path d="M29 34h27M29 39h27M29 44h27M29 49h27M29 54h27M29 59h27" stroke="#c8ccd2"/><use href="#screens" x="54" y="52" width="24" height="24"/></svg>
  <svg class="thumb" viewBox="0 0 84 80"><path d="M5 17h74v45H5Z" fill="#242424"/><path d="M5 17h8v45H5Z" fill="#444"/><g stroke-width="5" stroke-dasharray="6 2 4 2 8 1"><path d="M15 23h63" stroke="#98866b"/><path d="M15 32h63" stroke="#56668c"/><path d="M15 41h63" stroke="#8d8c7e"/><path d="M15 50h63M15 58h63" stroke="#55605a"/></g><use href="#photos" x="54" y="52" width="24" height="24"/></svg>
  <svg class="thumb" viewBox="0 0 84 80"><path d="M5 17h74v45H5Z" fill="#33241f"/><path d="M5 17h6v45H5Z" fill="#4a4340"/><path d="M5 17h74v2H5Z" fill="#4a4340"/><use href="#mail" x="54" y="52" width="24" height="24"/></svg>
  <svg class="thumb" viewBox="0 0 84 80"><path d="M5 17h74v45H5Z" fill="#222"/><path d="M5 17h9v45H5Z" fill="#333"/><path d="M16 24h16M37 24h16M57 24h16" stroke="#555" stroke-width="4"/><path d="M16 34h58" stroke="#778" stroke-width="5" stroke-dasharray="5 2"/><path d="M16 46h60" stroke="#94908c" stroke-width="10" stroke-dasharray="8 1.500"/><path d="M16 57h50" stroke="#777" stroke-dasharray="12 6"/><use href="#music" x="54" y="52" width="24" height="24"/></svg>
  <svg class="thumb" viewBox="0 0 84 80"><path d="M12 12h58l-7 56q-2 8-22 8t-22-8Z" fill="url(#g-trash)"/><ellipse cx="41" cy="12" rx="28" ry="6.500" fill="#50565a" stroke="#8b9194" stroke-width="1.500"/></svg>
</div>
</body>
</html>
```
FILE: styles.css
```css
* { box-sizing: border-box; margin: 0; padding: 0; }
html, body { width: 3600px; height: 2338px; overflow: hidden; }
body {
  display: flex; flex-direction: column; gap: 2px;
  font-family: "Open Sans", sans-serif; color: #000;
  background: linear-gradient(90deg, #14100b 0, #131a1c 10%, #2c1f14 30%, #3a2c1e 42%, #0c0805 50%, #2e2114 62%, #32251a 70%, #0d0b0d 82%, #0c1520 100%);
}
svg { display: block; flex: none; overflow: visible; }
symbol { overflow: visible; }
i { font-style: normal; }
.defs { position: absolute; width: 0; height: 0; }

/* macOS menu bar */
.menubar { height: 86px; flex: none; display: flex; align-items: center; justify-content: space-between; padding: 0 35px 0 40px; color: #f0f0ee; font: 500 26px/36px Inter, sans-serif; background: linear-gradient(90deg, #2f3e2d, #37412f 22%, #3a3d2f 40%, #2c3226 60%, #1f2716 80%, #1d2810); }
.menus, .status { display: flex; align-items: center; }
.apple { width: 26px; height: 32px; margin-top: -4px; }
.menu { margin-left: 43px; letter-spacing: -.5px; }
.app-name { margin-left: 41px; font-weight: 700; letter-spacing: -.2px; }
.m-file { margin-left: 44px; }
.m-history { margin-left: 40px; }
.m-window { margin-left: 42px; letter-spacing: -1.2px; }
.m-window + .menu { margin-left: 41px; }
.st-monitor { width: 38px; height: 32px; }
.st-tiles { width: 30px; height: 28px; margin-left: 43px; }
.st-mem { width: 19px; height: 38px; margin-left: 40px; }
.st-cpu { width: 306px; height: 38px; margin-left: 35px; }
.st-layers { width: 30px; height: 34px; margin-left: 37px; }
.st-sound { width: 40px; height: 28px; margin-left: 38px; }
.st-lang { width: 44px; height: 32px; margin-left: 39px; border: 2.5px solid #eee; border-radius: 6px; font: 600 21px/27px Inter, sans-serif; text-align: center; }
.st-play { width: 30px; height: 30px; margin-left: 40px; }
.st-battery { width: 50px; height: 24px; margin-left: 35px; }
.st-wifi { width: 36px; height: 26px; margin-left: 38px; }
.st-search { width: 26px; height: 26px; margin-left: 39px; }
.st-cc { width: 31px; height: 28px; margin-left: 36px; }
.st-siri { width: 28px; height: 28px; margin-left: 32px; }
.st-date { width: 122px; margin-left: 32px; letter-spacing: -.4px; white-space: nowrap; }
.st-time { width: 69px; margin-left: 17px; letter-spacing: 0; }

/* Browser window */
.window { height: 2136px; flex: none; display: flex; flex-direction: column; border-radius: 20px; overflow: hidden; }
.toolbar { height: 105px; flex: none; display: flex; align-items: center; padding: 0 39px 1px 40px; background: #383838; border-top: 2px solid #737373; border-bottom: 2px solid #000; }
.tb-left { width: 970px; display: flex; align-items: center; }
.light { width: 24px; height: 24px; margin-right: 16px; border-radius: 50%; }
.red { background: #ed6a5e; }
.yellow { background: #f5bf4f; }
.green { background: #61c554; }
.tb-sidebar { width: 40px; height: 32px; margin: -2px 0 0 36px; }
.tb-rule { width: 2px; height: 36px; margin-left: 13px; background: #505050; }
.tb-chev { width: 14px; height: 10px; margin-left: 11px; }
.tb-back { width: 17px; height: 30px; margin: -2px 0 0 51px; }
.tb-fwd { width: 17px; height: 30px; margin: -2px 0 0 55px; }
.tb-shield { width: 28px; height: 33px; margin-top: -2px; }
.address { width: 1460px; height: 56px; margin-left: 32px; display: grid; grid-template-columns: 624px auto 1fr; align-items: center; border: 2px solid #505050; border-radius: 13px; font: 500 26px/36px Inter, sans-serif; color: #f5f5f5; }
.tb-lock { width: 16px; height: 24px; justify-self: end; margin-right: -16px; }
.url { margin-left: 28px; letter-spacing: -.45px; }
.address-tools { display: flex; justify-content: flex-end; align-items: center; gap: 13px; padding-right: 12px; }
.tb-translate { width: 38px; height: 28px; margin-top: -3px; }
.tb-reload { width: 22px; height: 28px; margin-top: -3px; }
.tb-right { margin: -3px -1px 0 auto; display: flex; align-items: center; gap: 44px; }
.tb-download { width: 34px; height: 34px; }
.tb-share { width: 30px; height: 38px; margin-top: -4px; }
.tb-plus { width: 28px; height: 28px; }
.tb-tabs { width: 36px; height: 36px; }

/* Page */
.page { flex: 1; min-height: 0; position: relative; display: flex; flex-direction: column; background: #fafbfd; overflow: hidden; }
.container { width: 2280px; margin: 0 auto; }
.site-header { height: 167px; flex: none; display: flex; padding-left: 672px; background: #fff; }
.logo { width: 308px; display: flex; gap: 20px; padding-top: 43px; }
.logo-mark { width: 72px; height: 84px; }
.logo-text { margin-top: 1px; font: 300 55px/60px Inter, sans-serif; font-feature-settings: "cv11"; -webkit-text-stroke: 1px #000; letter-spacing: -.5px; }
.site-nav { display: grid; grid-template-columns: repeat(6, 321.600px); }
.nav-item { display: flex; flex-direction: column; align-items: center; gap: 22px; padding-top: 28px; color: #777; font-size: 24px; line-height: 36px; }
.nav-item.active { color: #fff; background: #5fcf63; }
.nav-icon { width: 48px; height: 48px; }
.caret { display: inline-block; margin-left: 5px; vertical-align: 3px; border: 8px solid transparent; border-top-color: currentColor; border-bottom: 0; }

h1, h2, h3 { font-family: Inter, sans-serif; font-weight: 300; font-feature-settings: "cv11"; -webkit-text-stroke: .6px currentColor; }
.hero { height: 768px; flex: none; padding-top: 38px; color: #fff; background: #5fcf63; }
.hero-top { height: 68px; display: flex; justify-content: space-between; }
.page-title { font-size: 58px; line-height: 66px; letter-spacing: 1.2px; }
.delete { width: 137px; height: 68px; padding-bottom: 2px; border: 0; border-radius: 8px; background: #ed4925; color: #fff; font: 28px "Open Sans", sans-serif; }
.columns { display: grid; grid-template-columns: repeat(3, 720px); gap: 60px; margin-top: 58px; }
.column { display: flex; flex-direction: column; font-size: 26px; line-height: 36px; }
.column h2 { font-size: 46px; line-height: 52px; text-align: center; letter-spacing: .7px; }
.column .h-access { letter-spacing: 0; }
.hero-badge { width: 208px; height: 50px; align-self: center; margin-top: 17px; border: 2px solid #fff; border-radius: 6px; font-size: 26px; font-weight: 600; line-height: 44px; text-align: center; letter-spacing: 1.5px; text-indent: 1px; }
.props { display: grid; grid-template-columns: 200px 1fr; grid-template-rows: 52px 72px 36px 36px 36px 36px; row-gap: 8px; margin-top: 39px; white-space: nowrap; }
.p-guid { padding-top: 18px; }
.p-enabled { padding-top: 5px; }
.toggle { display: flex; justify-content: flex-end; width: 72px; height: 30px; border-radius: 15px; background: #fff; }
.knob { width: 40px; height: 40px; margin: -6px -4px 0 0; flex: none; border-radius: 50%; background: #e5e5e5; box-shadow: 0 2px 8px rgba(0,0,0,.3); }
.config-btn { height: 64px; margin: 22px 2px 0; padding-bottom: 2px; border: 0; border-radius: 6px; background: #fff; color: #5fcf63; font: 28px "Open Sans", sans-serif; }
.location-card { height: 300px; margin-top: 20px; padding: 17px 20px 0; border: 4px solid #000; border-radius: 8px; }
.location-title { font-size: 46px; line-height: 52px; margin-bottom: 19px; letter-spacing: .6px; }
b { font-weight: 600; }
.enabled { margin: 10px 12px 0 0; font-size: 23px; font-weight: 600; line-height: 29px; letter-spacing: 1.2px; text-align: right; }
.access-box { height: 84px; margin-top: 20px; border: 2px solid #fff; border-radius: 8px; font-size: 28px; line-height: 78px; text-align: center; }

.filters { display: flex; justify-content: flex-end; align-items: flex-start; padding-top: 30px; font-size: 22px; }
.group { height: 72px; display: flex; border: 2px solid #e9e9e9; border-radius: 6px; background: #fff; overflow: hidden; }
.btn { text-align: center; line-height: 67px; border-left: 2px solid #e9e9e9; }
.b-device { width: 174px; border: 0; background: #e9e9e9; }
.b-az { width: 75px; }
.b-loc { width: 150px; }
.btn-all { width: 103px; height: 72px; margin-left: 13px; border: 2px solid #e9e9e9; border-radius: 6px; background: #fff; text-align: center; line-height: 67px; }
.btn-all .caret { margin-left: 6px; vertical-align: 2px; }
.search { width: 300px; height: 68px; margin-left: 10px; border: 2px solid #c9c9c9; border-radius: 8px; background: #fff; font: 28px "Open Sans", sans-serif; text-align: center; }
.search::placeholder { color: #999; }

.cards { width: 3294px; margin: 24px 0 0 153px; display: grid; grid-template-columns: repeat(6, 1fr); gap: 29px 28px; align-items: start; }
.card { display: flex; flex-direction: column; padding: 13px 24px 17px; border-radius: 6px; background: #e9e9e9; font-size: 26px; line-height: 36px; white-space: nowrap; }
.card b { letter-spacing: .13px; }
.card-head { height: 180px; display: flex; justify-content: space-between; }
.card h3 { margin-top: 2px; font-size: 46px; line-height: 52px; letter-spacing: .3px; white-space: normal; }
.card .wide { letter-spacing: 1px; }
.card .tight { letter-spacing: 0; }
.card-icon { width: 180px; height: 180px; margin-top: 2px; }
.badge { width: 176px; height: 38px; margin-top: 9px; align-self: flex-end; border-radius: 5px; background: #5fcf63; color: #fff; font-size: 22.500px; font-weight: 600; line-height: 35px; letter-spacing: 1.300px; text-indent: 1px; text-align: center; }
.switch-text { font: 600 43px Inter, sans-serif; fill: #e9e9e9; }
.percent { font: 600 43px Inter, sans-serif; fill: #5fcf63; text-anchor: middle; }
.hpa { font: 500 14px Inter, sans-serif; text-anchor: middle; }

.footer { margin-top: auto; height: 38px; display: grid; grid-template-columns: 300px 1fr 470px; align-items: start; padding: 0 31px 0 30px; color: #444; font-size: 28px; line-height: 38px; }
.language { height: 76px; padding: 11px 15px; border: 2px solid #c9c9c9; border-radius: 8px; color: #000; font-size: 27px; line-height: 40px; }
.version { padding-left: 1212px; display: flex; gap: 18px; white-space: nowrap; }
.v-link { color: #000; }
.session { text-align: right; white-space: nowrap; }
.dock-shade { position: absolute; left: 0; right: 0; bottom: 0; height: 80px; background: linear-gradient(transparent, rgba(0,0,0,.12)); -webkit-mask-image: linear-gradient(90deg, transparent, #000 220px, #000 3380px, transparent); }
.scrollbar { position: absolute; right: 4px; top: 3px; width: 14px; height: 1992px; border-radius: 7px; background: rgba(0,0,0,.5); }

/* Dock */
.dock { width: 3445px; height: 102px; flex: none; margin-left: 78px; display: flex; padding-left: 2px; border: 2px solid #4a4744; border-radius: 30px; background: linear-gradient(90deg, #1a1b1b, #1d1f1e 12%, #32251a 28%, #2f2419 40%, #191918 46%, #1b1a18 52%, #33271b 60%, #181817 72%, #17181a); }
.app { width: 84px; height: 98px; flex: none; position: relative; padding: 14px 10px 0; }
.app svg { width: 64px; height: 64px; }
.app.run::after { content: ""; display: block; width: 8px; height: 8px; margin: 10px auto 0; border-radius: 50%; background: #9b9794; }
.app.big { padding: 6px 2px 0; }
.app.big svg { width: 80px; height: 80px; }
.count { position: absolute; left: 54px; top: 6px; width: 30px; height: 30px; border-radius: 50%; background: #dd4a3e; color: #fff; font: 500 18px/30px Inter, sans-serif; text-align: center; }
.dock-rule { width: 2px; height: 74px; margin: 12px 18px 0; flex: none; background: #56514c; }
.thumb { width: 84px; height: 80px; margin-top: 6px; }
.cal-month { font: 700 13px Inter, sans-serif; fill: #fff; text-anchor: middle; }
.cal-day { font: 300 38px Inter, sans-serif; fill: #222; text-anchor: middle; }
.kicad-text { font: 800 46px "Open Sans", sans-serif; fill: #fff; text-anchor: middle; letter-spacing: -3px; }
.fusion-f { font: 700 26px Inter, sans-serif; fill: #fff; text-anchor: middle; }
.fusion-n { font: 700 11px Inter, sans-serif; fill: #fff; text-anchor: middle; }
.xlsx { font: 9px Inter, sans-serif; fill: #333; text-anchor: middle; }
.lade { font: 700 10px Inter, sans-serif; fill: #fff; text-anchor: middle; }
```
